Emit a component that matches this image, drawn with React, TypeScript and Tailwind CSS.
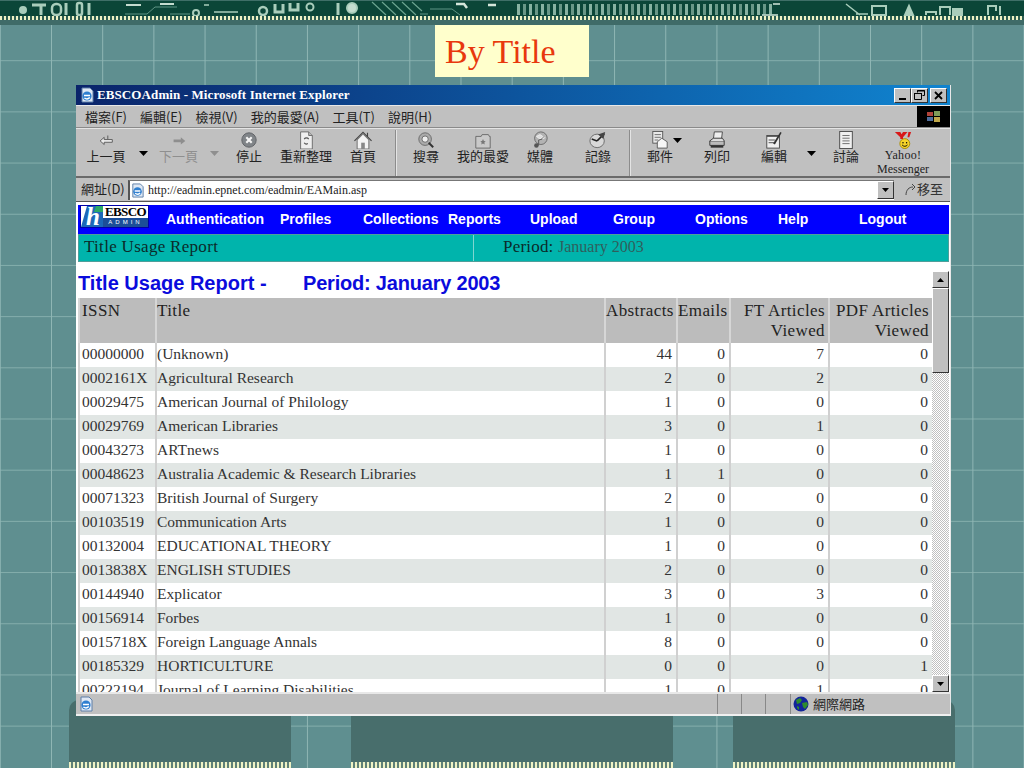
import React from "react"

const serif = "font-['Liberation_Serif','Times_New_Roman',serif]"
const cjk = "font-['Noto_Sans_CJK_TC','Noto_Sans',sans-serif]"
const arial = "font-['Liberation_Sans',Arial,sans-serif]"

const rows: [string, string, number, number, number, number][] = [
    ["00000000", "(Unknown)", 44, 0, 7, 0],
    ["0002161X", "Agricultural Research", 2, 0, 2, 0],
    ["00029475", "American Journal of Philology", 1, 0, 0, 0],
    ["00029769", "American Libraries", 3, 0, 1, 0],
    ["00043273", "ARTnews", 1, 0, 0, 0],
    ["00048623", "Australia Academic & Research Libraries", 1, 1, 0, 0],
    ["00071323", "British Journal of Surgery", 2, 0, 0, 0],
    ["00103519", "Communication Arts", 1, 0, 0, 0],
    ["00132004", "EDUCATIONAL THEORY", 1, 0, 0, 0],
    ["0013838X", "ENGLISH STUDIES", 2, 0, 0, 0],
    ["00144940", "Explicator", 3, 0, 3, 0],
    ["00156914", "Forbes", 1, 0, 0, 0],
    ["0015718X", "Foreign Language Annals", 8, 0, 0, 0],
    ["00185329", "HORTICULTURE", 0, 0, 0, 1],
    ["00222194", "Journal of Learning Disabilities", 1, 0, 1, 0],
]

const navItems = [
    { label: "Authentication", cls: "w-[114px]" },
    { label: "Profiles", cls: "w-[83px]" },
    { label: "Collections", cls: "w-[85px]" },
    { label: "Reports", cls: "w-[82px]" },
    { label: "Upload", cls: "w-[83px]" },
    { label: "Group", cls: "w-[82px]" },
    { label: "Options", cls: "w-[83px]" },
    { label: "Help", cls: "w-[81px]" },
    { label: "Logout", cls: "w-[60px]" },
]

const menus = ["檔案(F)", "編輯(E)", "檢視(V)", "我的最愛(A)", "工具(T)", "說明(H)"]

function Caret({ muted }: { muted?: boolean }) {
    return (
        <svg width="9" height="5" viewBox="0 0 9 5" className="mt-[22px]">
            <path d="M0 0h9L4.500 5z" fill={muted ? "#8f8f8f" : "#000"} />
        </svg>
    )
}

function IeIcon({ size = 16 }: { size?: number }) {
    return (
        <svg width={size} height={size} viewBox="0 0 16 16">
            <path d="M3 1h8l3 3v11H3z" fill="#dfe8f4" stroke="#5d7fa8" />
            <circle cx="8" cy="9" r="4.600" fill="#2f7fd0" />
            <path d="M5 8.500h6M5.400 11c2 1.500 4 1 5.400-.4" stroke="#fff" strokeWidth="1.400" fill="none" />
        </svg>
    )
}

function Globe() {
    return (
        <svg width="16" height="16" viewBox="0 0 16 16">
            <circle cx="8" cy="8" r="7.500" fill="#12249a" />
            <path d="M3 4l4-2 2 2-2 3-3 1zM9 7l5-1 1 3-3 4-2-2zM4 10l2 1 0 3-2-2z" fill="#2e8b2e" />
        </svg>
    )
}

const icons: Record<string, React.ReactNode> = {
    back: <path d="M8 7 3.500 11 8 15v-2.500h9v-3H8zM12 9V5" fill="#ececec" stroke="#555" />,
    forward: <path d="M12 7l5 4-5 4v-2.500H4v-3h8z" fill="#8e8e8e" />,
    stop: (
        <>
            <circle cx="10" cy="10" r="8" fill="#808488" stroke="#5c5f63" />
            <path d="M7 7l6 6M13 7l-6 6" stroke="#f4f4f4" strokeWidth="2.400" />
        </>
    ),
    refresh: (
        <>
            <path d="M4 1h9l4 4v15H4z" fill="#efefef" stroke="#666" />
            <path d="M13 1v4h4" fill="#bbb" stroke="#666" />
            <path d="M8 9a3 3 0 0 1 5 0M12 14a3 3 0 0 1-4-1" fill="none" stroke="#555" strokeWidth="1.300" />
        </>
    ),
    home: (
        <>
            <path d="M.5 11 10 1.500 19.500 11M15 2v5" fill="none" stroke="#444" strokeWidth="1.300" />
            <path d="M3.500 10v10h13V10l-6.500-6.500z" fill="#f4f4f4" stroke="#666" />
            <rect x="8" y="13" width="4" height="7" fill="#888" />
        </>
    ),
    search: (
        <>
            <circle cx="9" cy="9" r="7" fill="#aaa" stroke="#666" />
            <circle cx="9" cy="9" r="3.500" fill="#eee" stroke="#666" />
            <path d="M13 13l5 5" stroke="#333" strokeWidth="2.200" />
        </>
    ),
    favorites: (
        <>
            <path d="M2 6h6l1-2h7l1 2h1v13H2z" fill="#c9c9c9" stroke="#666" />
            <path d="M10 9l1 2 2 .3-1.500 1.500.4 2.200-1.900-1-1.900 1 .4-2.200L7 11.300 9 11z" fill="#777" />
        </>
    ),
    media: (
        <>
            <circle cx="11" cy="8" r="7" fill="#b3b3b3" stroke="#666" />
            <path d="M6 6l4-2 3 2-3 3zM13 9l3-2" stroke="#eee" fill="#ddd" />
            <circle cx="6" cy="16" r="2.500" fill="#555" />
            <path d="M8.500 16V10l4-1" stroke="#555" fill="none" />
        </>
    ),
    history: (
        <>
            <ellipse cx="9" cy="11" rx="8" ry="7.500" fill="#d8d8d8" stroke="#666" />
            <path d="M9 11l8-8M9 11 3 9" stroke="#222" strokeWidth="1.800" />
            <path d="M10 4l8-3-2 8z" fill="#444" />
        </>
    ),
    mail: (
        <>
            <rect x="2" y="0.500" width="11" height="13" fill="#e9e9e9" stroke="#555" />
            <path d="M4 4h7M4 7h7M4 10h4" stroke="#666" />
            <path d="M7 19v-7l5-4 6 4v7z" fill="#f6f6f6" stroke="#555" />
        </>
    ),
    print: (
        <>
            <path d="M7 1h9l-1 8H6z" fill="#eee" stroke="#444" />
            <path d="M2 11h16v5H2z" fill="#bbb" stroke="#333" />
            <path d="M2 11l4-3h10l2 3" fill="#ddd" stroke="#333" />
            <rect x="3" y="16" width="14" height="2.500" fill="#333" />
        </>
    ),
    edit: (
        <>
            <rect x="2" y="5" width="14" height="14" fill="#f0f0f0" stroke="#444" />
            <path d="M2 6h14M4 10h7M4 13h6" stroke="#444" />
            <path d="M9 14 17 1l1.500 1L11 15z" fill="#333" />
        </>
    ),
    discuss: (
        <>
            <rect x="3" y="0.500" width="14" height="19" fill="#f0f0f0" stroke="#444" />
            <path d="M6 5h8M6 8h8M6 11h8M6 14h8" stroke="#666" />
        </>
    ),
    yahoo: (
        <>
            <circle cx="12" cy="14" r="5.500" fill="#f6d42a" stroke="#a88a00" />
            <circle cx="10" cy="13" r=".8" fill="#000" />
            <circle cx="14" cy="13" r=".8" fill="#000" />
            <path d="M9 15.500c2 2 4 2 6 0" fill="none" stroke="#000" />
            <path d="M1 1h6l1.500 2.500L10 1h5l-5 6v2H7V7z" fill="#d81818" />
            <path d="M16 1h3l-2 6h-2z" fill="#d81818" />
        </>
    ),
}

function ToolButton({ icon, label, cls, muted, caret }: { icon: string; label: string; cls: string; muted?: boolean; caret?: boolean }) {
    return (
        <div className={`relative flex flex-col items-center pt-[2px] shrink-0 ${cls}`}>
            <svg width="18" height="18" viewBox="0 0 20 20">
                {icons[icon]}
            </svg>
            {caret && (
                <svg width="9" height="5" viewBox="0 0 9 5" className="absolute left-[35px] top-[9px]">
                    <path d="M0 0h9L4.500 5z" fill="#000" />
                </svg>
            )}
            <span className={`${cjk} text-[13px] leading-[16px] -mt-[1px] ${muted ? "text-[#8f8f8f]" : "text-[#222]"}`}>{label}</span>
        </div>
    )
}

function ToolSep({ cls }: { cls: string }) {
    return <div className={`w-[2px] h-[46px] mt-[1px] shrink-0 border-l border-l-[#8c8c8c] border-r border-r-[#e4e4e4] ${cls}`} />
}

function CircuitBand() {
    const pins = Array.from({ length: 43 }, (_, i) => 517 + i * 6)
    return (
        <svg width="1024" height="16" viewBox="0 0 1024 16" className="block">
            <rect width="1024" height="16" fill="#0b4638" />
            <rect width="1024" height="1" fill="#3f6f68" />
            <g fill="none" stroke="#a9cdbb" strokeWidth="2" className="blur-[0.4px]">
                <circle cx="23" cy="10" r="3" fill="#a9cdbb" />
                <path d="M32 5h14M41 5v10" strokeWidth="3" />
                <rect x="52" y="4" width="9" height="11" rx="4" strokeWidth="2.500" />
                <path d="M66 3v12" strokeWidth="3" />
                <rect x="77" y="3" width="5" height="12" rx="2" strokeWidth="2.500" />
                <path d="M89 3v12" strokeWidth="3" />
                <path d="M125 14h22l8-7h22M170 14h20" strokeWidth="1" stroke="#5f9484" />
                <path d="M126 5h15M160 4h14" stroke="#c5dccf" strokeWidth="2" />
                <circle cx="196" cy="13" r="3" />
                <path d="M204 5h5M214 12h24" strokeWidth="1.500" />
                <circle cx="263" cy="11" r="4" strokeWidth="2.500" />
                <path d="M275 4v8h8v-8M290 3v7h8V3" strokeWidth="3" />
                <circle cx="310" cy="7" r="3.500" />
                <path d="M338 3v12" strokeWidth="3" />
                <circle cx="352" cy="8" r="5" fill="#c5dccf" />
                <path d="M372 2l14 13M382 2l14 13M392 2l14 13M402 2l14 13M412 2l10 9" strokeWidth="1.200" stroke="#6ba38f" />
                <path d="M420 14h8M430 9h22l8 6" strokeWidth="1" stroke="#5f9484" />
                <path d="M456 4h8l3 4M488 5h8" stroke="#d4e6da" strokeWidth="2.500" />
                <path d="M773 4h7M762 15h16" strokeWidth="1.500" stroke="#d4e6da" />
                <path d="M846 4l14 11M856 14h12" strokeWidth="1.500" />
                <rect x="872" y="6" width="14" height="9" strokeWidth="2" />
                <path d="M905 15l4-9 4 9z" fill="#a9cdbb" />
                <path d="M926 15v-3h10v3M940 15V7h10v8" strokeWidth="2" />
                <rect x="953" y="9" width="9" height="6" fill="#a9cdbb" />
                <path d="M988 15V6h8v5M1000 6v9" strokeWidth="2" />
            </g>
            {pins.map((x) => (
                <rect key={x} x={x} y="4" width="3" height="11" fill="#a6cdbd" opacity={x % 4 === 1 ? 0.8 : 0.6} />
            ))}
        </svg>
    )
}

function EbscoLogo() {
    return (
        <div className="w-[69px] h-[23px] shrink-0 self-start flex bg-white border border-[#0000aa]">
            <div className="relative w-[22px] shrink-0 overflow-hidden">
                <svg width="22" height="21" viewBox="0 0 22 21" className="block">
                    <path d="M6 0h16v21H0z" fill="#1c68b8" />
                    <path d="M15 0h7v6h-9z" fill="#2aa868" />
                </svg>
                <span className={`${serif} absolute left-[5px] -top-[2px] italic font-bold text-white text-[25px] leading-none`}>h</span>
            </div>
            <div className="flex-1 min-w-0 flex flex-col items-center">
                <span className={`${serif} font-bold text-[13px] leading-[12px] text-black tracking-[-0.6px]`}>EBSCO</span>
                <span className={`${arial} w-full h-[9px] bg-[#1c4f98] text-white text-[6px] leading-[9px] text-center tracking-[3px]`}>ADMIN</span>
            </div>
        </div>
    )
}

const thCls = "font-normal align-top pt-[3px] border-x-2 border-x-[#d6d6d6]"
const tdCls = "pb-[2px] border-x-2 border-x-[#d0d0d0]"

export default function App() {
    return (
        <div className="relative w-[1024px] h-[768px] overflow-hidden flex flex-col bg-[#5f8f90] bg-[image:linear-gradient(90deg,#8fb6b4_1px,transparent_1px),linear-gradient(#84aeac_1px,transparent_1px)] bg-[size:51.2px_51.2px] bg-[position:51px_9px]">
            <div className="h-[25px] shrink-0 bg-[#3f6b68]">
                <CircuitBand />
                <div className="h-[4px] bg-[repeating-linear-gradient(90deg,#eef2c4_0_2px,#2d5e52_2px_4px)]" />
            </div>

            <div className={`${serif} mx-auto shrink-0 w-[154px] h-[52px] pl-[10px] bg-[#ffffcc] text-[#e8380d] text-[34px] leading-[54px]`}>
                By Title
            </div>

            <div className="relative z-10 mt-[8px] ml-[76px] shrink-0 w-[875px] h-[631px] flex flex-col bg-[#c0c0c0] border-r border-r-[#e8e8e8]">
                {/* title bar */}
                <div className="h-[20px] shrink-0 flex items-center pl-[3px] pr-[3px] bg-[linear-gradient(90deg,#0a246a,#1084d0)]">
                    <IeIcon />
                    <span className={`${serif} font-bold ml-[2px] text-white text-[13px] tracking-[0.1px]`}>
                        EBSCOAdmin - Microsoft Internet Explorer
                    </span>
                    <div className="ml-auto flex">
                        {["min", "max"].map((b) => (
                            <div key={b} className="w-[17px] h-[15px] bg-[#c0c0c0] border border-t-white border-l-white border-r-[#333] border-b-[#333] flex items-center justify-center">
                                {b === "min" ? (
                                    <div className="w-[7px] h-[2px] bg-black mt-[7px]" />
                                ) : (
                                    <svg width="11" height="10" viewBox="0 0 11 10">
                                        <path d="M3.500 2.500V.5h7v5h-2M.5 3.500h7v6h-7z" fill="none" stroke="#000" />
                                        <path d="M3 1h8M0 3.500h8" stroke="#000" />
                                    </svg>
                                )}
                            </div>
                        ))}
                        <div className="w-[17px] h-[15px] ml-[2px] bg-[#c0c0c0] border border-t-white border-l-white border-r-[#333] border-b-[#333] flex items-center justify-center">
                            <svg width="9" height="9" viewBox="0 0 9 9">
                                <path d="M1 1l7 7M8 1 1 8" stroke="#000" strokeWidth="1.800" />
                            </svg>
                        </div>
                    </div>
                </div>

                {/* menu bar */}
                <div className="h-[23px] shrink-0 flex items-center pl-[9px] border-t border-t-[#e8e8e8] border-b border-b-[#8a8a8a]">
                    <div className={`${cjk} flex gap-[13px] text-[13px] text-[#222]`}>
                        {menus.map((m) => (
                            <span key={m}>{m}</span>
                        ))}
                    </div>
                    <div className="ml-auto w-[33px] h-[21px] bg-black flex items-center justify-center">
                        <svg width="13" height="11" viewBox="0 0 13 11">
                            <rect x="0" y="1" width="6" height="4" fill="#b0433a" />
                            <rect x="7" y="0" width="6" height="5" fill="#7f9c58" />
                            <rect x="0" y="6" width="6" height="4" fill="#4e6d9c" />
                            <rect x="7" y="6" width="6" height="5" fill="#c0a84a" />
                        </svg>
                    </div>
                </div>

                {/* toolbar */}
                <div className="h-[50px] shrink-0 flex items-start pl-[3px] border-t border-t-[#e4e4e4] border-b-2 border-b-[#6a6a6a]">
                    <ToolButton icon="back" label="上一頁" cls="w-[54px]" />
                    <div className="w-[20px] shrink-0 flex justify-center"><Caret /></div>
                    <ToolButton icon="forward" label="下一頁" cls="w-[51px]" muted />
                    <div className="w-[20px] shrink-0 flex justify-center"><Caret muted /></div>
                    <ToolButton icon="stop" label="停止" cls="w-[50px]" />
                    <ToolButton icon="refresh" label="重新整理" cls="w-[64px]" />
                    <ToolButton icon="home" label="首頁" cls="w-[50px]" />
                    <ToolSep cls="mx-[7px]" />
                    <ToolButton icon="search" label="搜尋" cls="w-[44px]" />
                    <ToolButton icon="favorites" label="我的最愛" cls="w-[70px]" />
                    <ToolButton icon="media" label="媒體" cls="w-[44px]" />
                    <ToolButton icon="history" label="記錄" cls="w-[60px] ml-[6px]" />
                    <ToolSep cls="ml-[1px] mr-[7px]" />
                    <ToolButton icon="mail" label="郵件" cls="w-[44px]" caret />
                    <ToolButton icon="print" label="列印" cls="w-[70px]" />
                    <ToolButton icon="edit" label="編輯" cls="w-[44px]" />
                    <div className="w-[30px] shrink-0 flex justify-center"><Caret /></div>
                    <ToolButton icon="discuss" label="討論" cls="w-[40px]" />
                    <div className="w-[74px] shrink-0 flex flex-col items-center pt-[2px]">
                        <svg width="18" height="18" viewBox="0 0 20 20">{icons.yahoo}</svg>
                        <span className={`${serif} text-[12px] leading-[13px] tracking-[0.3px] text-[#222]`}>Yahoo!</span>
                        <span className={`${serif} text-[12px] leading-[14px] text-[#222]`}>Messenger</span>
                    </div>
                </div>

                {/* address bar */}
                <div className="h-[23px] shrink-0 flex items-center pl-[5px]">
                    <span className={`${cjk} text-[13px] text-[#222] w-[47px] pb-[2px]`}>網址(D)</span>
                    <div className="w-[766px] h-[20px] flex items-center bg-white border-l-2 border-l-[#555] border-t border-t-[#777]">
                        <IeIcon size={15} />
                        <span className={`${serif} ml-[3px] text-[12px] text-[#222]`}>http://eadmin.epnet.com/eadmin/EAMain.asp</span>
                        <div className="ml-auto w-[17px] h-[18px] bg-[#c0c0c0] border border-t-white border-l-white border-r-[#333] border-b-[#333] flex items-center justify-center">
                            <svg width="7" height="4" viewBox="0 0 7 4"><path d="M0 0h7L3.500 4z" fill="#000" /></svg>
                        </div>
                    </div>
                    <div className={`${cjk} ml-[10px] pb-[2px] flex items-center text-[13px] text-[#333]`}>
                        <svg width="14" height="14" viewBox="0 0 14 14" className="mr-[-1px]">
                            <path d="M2 13c0-5 3-8 7-8M8 2l3 3-3 3" fill="none" stroke="#444" />
                        </svg>
                        移至
                    </div>
                </div>

                <div className="h-[1px] shrink-0 bg-[#555]" />

                {/* page */}
                <div className="flex-1 min-h-0 bg-white pl-[2px] pr-[1px] pt-[3px] flex flex-col">
                    <div className="h-[29px] shrink-0 flex items-center pl-[2px] bg-[#0000ff]">
                        <EbscoLogo />
                        <div className={`${arial} ml-[17px] flex font-bold text-white text-[14px]`}>
                            {navItems.map((n) => (
                                <span key={n.label} className={n.cls}>{n.label}</span>
                            ))}
                        </div>
                    </div>

                    <div className={`${serif} h-[28px] shrink-0 flex items-center bg-[#00b4ac] text-[17px] text-[#0b2b2a] border border-[#4f9f9a]`}>
                        <div className="w-[395px] h-full flex items-center pl-[5px] pb-[2px] tracking-[0.3px] border-r border-r-[#7fd6d0]">Title Usage Report</div>
                        <div className="pl-[29px] pb-[2px] tracking-[0.2px]">
                            Period: <span className="text-[16px] tracking-normal text-[#2f5f5c]">January 2003</span>
                        </div>
                    </div>

                    <div className="flex-1 min-h-0 flex">
                        <div className="w-[854px] shrink-0 overflow-hidden">
                            <div className={`${arial} h-[36px] flex items-end pb-[4px] font-bold text-[#0b0bdc] text-[20px] leading-[22px]`}>
                                <span className="w-[225px]">Title Usage Report -</span>
                                <span className="tracking-[-0.2px]">Period: January 2003</span>
                            </div>
                            <table className={`${serif} table-fixed border-collapse w-[854px] text-[#333]`}>
                                <colgroup>
                                    <col className="w-[77px]" />
                                    <col className="w-[449px]" />
                                    <col className="w-[72px]" />
                                    <col className="w-[53px]" />
                                    <col className="w-[99px]" />
                                    <col className="w-[104px]" />
                                </colgroup>
                                <thead>
                                    <tr className="h-[45px] bg-[#bcbcbc] text-[#222] text-[17px] leading-[20px] tracking-[0.4px]">
                                        <th className={`${thCls} text-left pl-[2px]`}>ISSN</th>
                                        <th className={`${thCls} text-left`}>Title</th>
                                        <th className={`${thCls} text-right pr-[3px]`}>Abstracts</th>
                                        <th className={`${thCls} text-right pr-[3px]`}>Emails</th>
                                        <th className={`${thCls} text-right pr-[3px]`}>FT Articles<br />Viewed</th>
                                        <th className={`${thCls} text-right pr-[3px]`}>PDF Articles<br />Viewed</th>
                                    </tr>
                                </thead>
                                <tbody className="text-[15.500px] leading-[20px]">
                                    {rows.map(([issn, title, abs, em, ft, pdf], i) => (
                                        <tr key={issn} className={`h-[24px] ${i % 2 ? "bg-[#e1e6e4]" : "bg-white"}`}>
                                            <td className={`${tdCls} pl-[2px]`}>{issn}</td>
                                            <td className={`${tdCls} whitespace-nowrap`}>{title}</td>
                                            <td className={`${tdCls} pr-[4px] text-right`}>{abs}</td>
                                            <td className={`${tdCls} pr-[4px] text-right`}>{em}</td>
                                            <td className={`${tdCls} pr-[4px] text-right`}>{ft}</td>
                                            <td className={`${tdCls} pr-[4px] text-right`}>{pdf}</td>
                                        </tr>
                                    ))}
                                </tbody>
                            </table>
                        </div>

                        {/* scrollbar */}
                        <div className="w-[17px] mt-[9px] shrink-0 flex flex-col bg-[repeating-conic-gradient(#c0c0c0_0_25%,#fff_0_50%)] bg-[size:2px_2px]">
                            <div className="h-[17px] shrink-0 bg-[#c0c0c0] border border-t-white border-l-white border-r-[#333] border-b-[#333] flex items-center justify-center">
                                <svg width="7" height="4" viewBox="0 0 7 4"><path d="M0 4h7L3.500 0z" fill="#000" /></svg>
                            </div>
                            <div className="h-[85px] shrink-0 bg-[#c0c0c0] border border-t-white border-l-white border-r-[#333] border-b-[#333]" />
                            <div className="flex-1" />
                            <div className="h-[17px] shrink-0 bg-[#c0c0c0] border border-t-white border-l-white border-r-[#333] border-b-[#333] flex items-center justify-center">
                                <svg width="7" height="4" viewBox="0 0 7 4"><path d="M0 0h7L3.500 4z" fill="#000" /></svg>
                            </div>
                        </div>
                    </div>
                </div>

                {/* status bar */}
                <div className="h-[24px] shrink-0 flex items-center pl-[2px] border-t-2 border-t-[#e8e8e8] border-b-2 border-b-[#f0f0f0]">
                    <IeIcon />
                    <div className="ml-auto flex h-full items-stretch">
                        <div className="w-[24px] border-l border-l-[#888]" />
                        <div className="w-[24px] border-l border-l-[#888]" />
                        <div className="w-[25px] border-l border-l-[#888]" />
                        <div className={`${cjk} w-[160px] pl-[2px] pb-[1px] flex items-center gap-[4px] text-[13px] text-[#222] border-l border-l-[#888]`}>
                            <Globe />
                            網際網路
                        </div>
                    </div>
                </div>
            </div>

            {/* bottom panels */}
            <div className="-mt-[16px] ml-[69px] flex-1 flex gap-[60px]">
                <div className="w-[222px] flex flex-col bg-[#486e6c] rounded-tl-[10px]">
                    <div className="flex-1" />
                    <div className="h-[6px] bg-[repeating-linear-gradient(90deg,#eef2c4_0_2px,#5e8078_2px_4px)]" />
                </div>
                <div className="w-[322px] flex flex-col bg-[#486e6c]">
                    <div className="flex-1" />
                    <div className="h-[6px] bg-[repeating-linear-gradient(90deg,#eef2c4_0_2px,#5e8078_2px_4px)]" />
                </div>
                <div className="w-[222px] flex flex-col bg-[#486e6c] rounded-tr-[10px]">
                    <div className="flex-1" />
                    <div className="h-[6px] bg-[repeating-linear-gradient(90deg,#eef2c4_0_2px,#5e8078_2px_4px)]" />
                </div>
            </div>
        </div>
    )
}
